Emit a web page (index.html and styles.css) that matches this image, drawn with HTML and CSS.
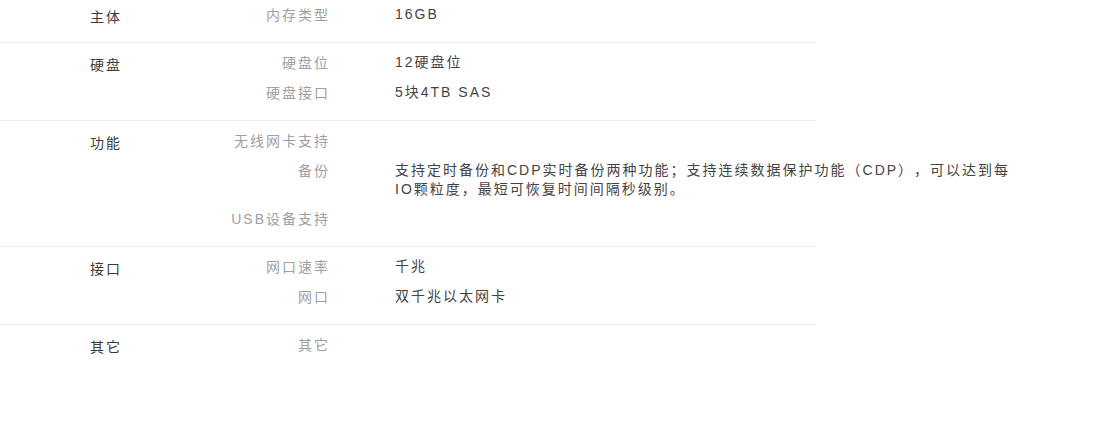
FILE: index.html
```html
<!DOCTYPE html>
<html lang="zh-CN">
<head>
<meta charset="utf-8">
<title>规格参数</title>
<link rel="stylesheet" href="styles.css">
</head>
<body>
<div class="spec">
  <div class="group">
    <div class="group-name">主体</div>
    <div class="rows">
      <div class="row"><div class="key">内存类型</div><div class="val">16GB</div></div>
    </div>
  </div>
  <div class="group">
    <div class="group-name">硬盘</div>
    <div class="rows">
      <div class="row"><div class="key">硬盘位</div><div class="val">12硬盘位</div></div>
      <div class="row"><div class="key">硬盘接口</div><div class="val">5块4TB SAS</div></div>
    </div>
  </div>
  <div class="group">
    <div class="group-name">功能</div>
    <div class="rows">
      <div class="row"><div class="key">无线网卡支持</div><div class="val"></div></div>
      <div class="row"><div class="key">备份</div><div class="val">支持定时备份和CDP实时备份两种功能；支持连续数据保护功能（CDP），可以达到每IO颗粒度，最短可恢复时间间隔秒级别。</div></div>
      <div class="row"><div class="key">USB设备支持</div><div class="val"></div></div>
    </div>
  </div>
  <div class="group">
    <div class="group-name">接口</div>
    <div class="rows">
      <div class="row"><div class="key">网口速率</div><div class="val">千兆</div></div>
      <div class="row"><div class="key">网口</div><div class="val">双千兆以太网卡</div></div>
    </div>
  </div>
  <div class="group">
    <div class="group-name">其它</div>
    <div class="rows">
      <div class="row"><div class="key">其它</div><div class="val"></div></div>
    </div>
  </div>
</div>
</body>
</html>
```
FILE: styles.css
```css
html, body {
  margin: 0;
  padding: 0;
  background: #fff;
}
body {
  font-family: "Liberation Sans", "Noto Sans CJK SC", sans-serif;
  font-size: 14px;
  letter-spacing: 2px;
  text-spacing-trim: space-all;
  font-feature-settings: "chws" 0, "halt" 0;
}
.spec {
  width: 816px;
}
.group {
  display: flex;
  padding: 10px 0 7px;
  border-bottom: 1px solid #ececec;
}
.group:first-child {
  padding-top: 5px;
}
.group:last-child {
  border-bottom: none;
}
.group-name {
  width: 110px;
  padding-left: 90px;
  padding-top: 2px;
  line-height: 20px;
  color: #3c3c3c;
  flex-shrink: 0;
}
.rows {
  display: flex;
  flex-direction: column;
}
.row {
  display: flex;
  margin-bottom: 10px;
}
.key {
  width: 130px;
  text-align: right;
  line-height: 20px;
  color: #a0a0a0;
  flex-shrink: 0;
}
.val {
  margin-left: 65px;
  width: 620px;
  flex-shrink: 0;
  line-height: 19px;
  color: #444;
  min-height: 20px;
}
```
